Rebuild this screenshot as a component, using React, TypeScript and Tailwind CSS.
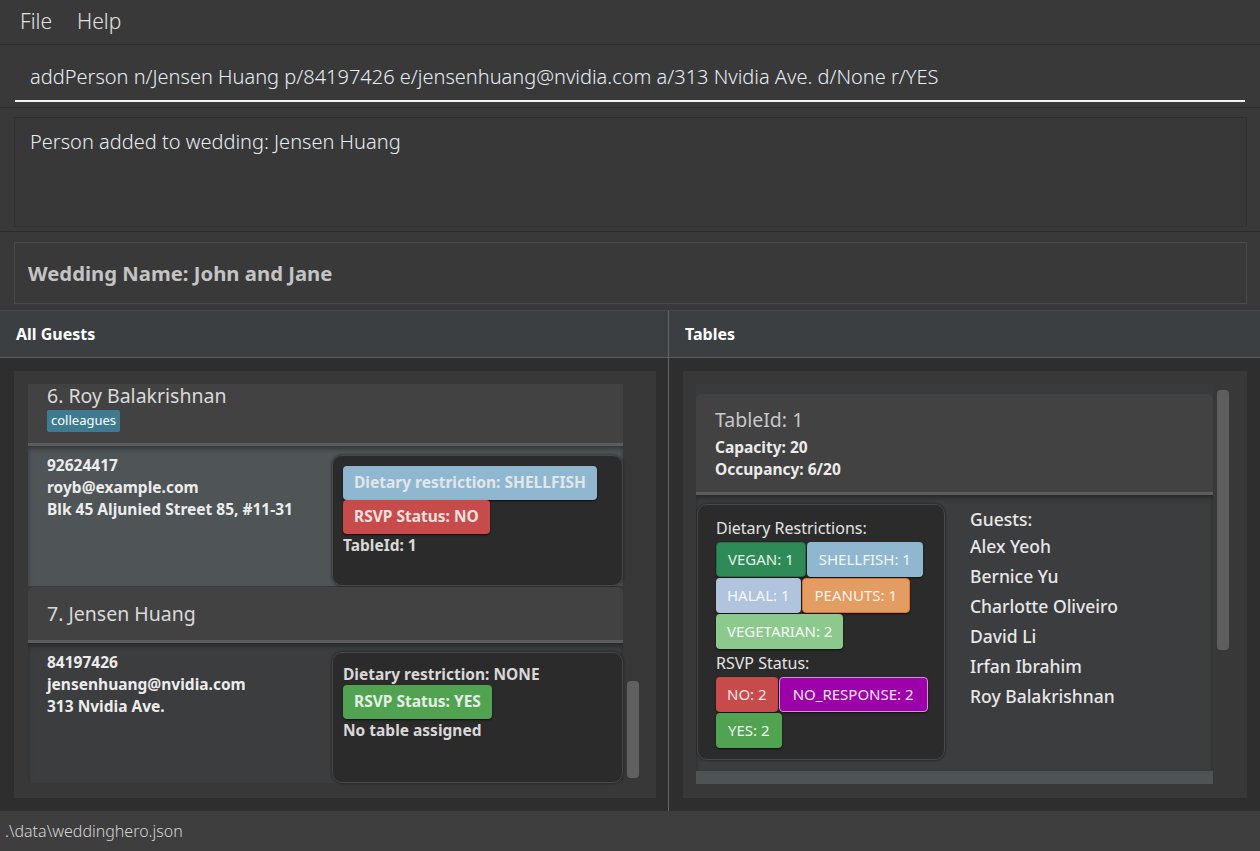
import React from "react";

// Badge used in guest cards and table summaries
const Badge = ({ children, className }: { children: React.ReactNode; className: string }) => (
  <div className={`flex items-center rounded-[4px] shadow-[0_1px_2px_rgba(0,0,0,0.7)] ${className}`}>{children}</div>
);

const PaneHeader = ({ title }: { title: string }) => (
  <div className="h-[47px] shrink-0 flex items-center px-4 bg-[#3b3f42] border-b border-[#5a5d60] text-[16px] font-bold text-white">
    {title}
  </div>
);

const InfoBox = ({ children }: { children: React.ReactNode }) => (
  <div className="w-[291px] h-[131px] mt-[9px] shrink-0 rounded-[10px] border border-[#484848] bg-[#2b2b2b] shadow-[0_0_3px_rgba(0,0,0,0.6)] px-[10px] pt-[10px] text-[15.5px] font-bold text-[#d8d8d8]">
    {children}
  </div>
);

const Details = ({ lines }: { lines: string[] }) => (
  <div className="flex-1 pl-[19px] pt-[8px] text-[15.5px] font-bold text-[#ececec] leading-[22px]">
    {lines.map((l) => (
      <div key={l}>{l}</div>
    ))}
  </div>
);

const guests = ["Alex Yeoh", "Bernice Yu", "Charlotte Oliveiro", "David Li", "Irfan Ibrahim", "Roy Balakrishnan"];

export default function App() {
  return (
    <div className="w-[1260px] h-[851px] overflow-hidden flex flex-col bg-[#393939] font-['Noto_Sans',sans-serif]">
      {/* menu bar */}
      <div className="h-[45px] shrink-0 flex items-center gap-[25px] pl-[20px] text-[21px] font-light text-[#e2e2e2] border-b border-[#2c2c2c]">
        <span>File</span>
        <span>Help</span>
      </div>

      {/* command box */}
      <div className="h-[63px] shrink-0 pt-[9px] px-[13px] border-b border-[#2c2c2c]">
        <div className="h-[48px] mx-[2px] flex items-center pl-[15px] border-b-2 border-[#f2f2f2] text-[20px] font-light text-[#e6edf5]">
          addPerson n/Jensen Huang p/84197426 e/jensenhuang@nvidia.com a/313 Nvidia Ave. d/None r/YES
        </div>
      </div>

      {/* result display */}
      <div className="h-[124px] shrink-0 pt-[9px] pb-[4px] pl-[14px] pr-[13px] border-b border-[#2c2c2c]">
        <div className="h-full border border-[#2f2f2f] bg-[#383838] pl-[15px] pt-[9px] text-[20px] font-light text-[#e6edf5]">
          Person added to wedding: Jensen Huang
        </div>
      </div>

      {/* wedding name */}
      <div className="h-[78px] shrink-0 pt-[10px] pb-[6px] pl-[14px] pr-[13px]">
        <div className="h-full flex items-center border border-[#4a4a4a] pl-[13px] text-[20.3px] font-bold text-[#c4c4c4]">
          Wedding Name: John and Jane
        </div>
      </div>

      {/* split pane */}
      <div className="h-[501px] shrink-0 flex border-t border-[#45494c] bg-[#2e2e2e]">
        {/* All guests */}
        <div className="w-[669px] shrink-0 flex flex-col border-r border-[#666]">
          <PaneHeader title="All Guests" />
          <div className="flex-1 pt-[13px] pl-[14px] pr-[12px] pb-[13px]">
            <div className="h-full bg-[#383838] flex pl-[14px] pt-[13px] pb-[14px]">
              <div className="w-[595px] shrink-0 flex flex-col">
                {/* card 6 (selected, scrolled partly out of view) */}
                <div className="shrink-0 bg-[#424242] pl-[19px] pt-[2px] pb-[11px]">
                  <div className="text-[19.5px] leading-[20px] text-[#dadada]">6. Roy Balakrishnan</div>
                  <div className="mt-[4px] inline-flex items-center h-[22px] px-[4px] rounded-[2px] bg-[#3e7b91] text-[13px] text-white">
                    colleagues
                  </div>
                </div>
                <div className="h-[3px] shrink-0 bg-[#5c5c5c]" />
                <div className="h-[140px] shrink-0 flex bg-[#4f5457] shadow-[inset_0_3px_4px_rgba(0,0,0,0.35)]">
                  <Details lines={["92624417", "royb@example.com", "Blk 45 Aljunied Street 85, #11-31"]} />
                  <InfoBox>
                    <Badge className="w-fit h-[34px] px-[11px] bg-[#8fb7cf] text-[#e2e6ea]">Dietary restriction: SHELLFISH</Badge>
                    <Badge className="w-fit h-[34px] px-[11px] bg-[#c84b4b] text-[#ece0e0]">RSVP Status: NO</Badge>
                    <div className="leading-[22px]">TableId: 1</div>
                  </InfoBox>
                </div>

                {/* card 7 */}
                <div className="mt-[1px] h-[53px] shrink-0 flex items-center rounded-t-[6px] bg-[#424242] pl-[19px]">
                  <div className="text-[19.5px] leading-[26px] text-[#dadada]">7. Jensen Huang</div>
                </div>
                <div className="h-[3px] shrink-0 bg-[#5c5c5c]" />
                <div className="h-[140px] shrink-0 flex bg-[#3c3d3f] shadow-[inset_0_3px_4px_rgba(0,0,0,0.35)]">
                  <Details lines={["84197426", "jensenhuang@nvidia.com", "313 Nvidia Ave."]} />
                  <InfoBox>
                    <div className="leading-[22px]">Dietary restriction: NONE</div>
                    <Badge className="w-fit h-[34px] px-[11px] bg-[#51a351] text-[#e4efe4]">RSVP Status: YES</Badge>
                    <div className="leading-[22px]">No table assigned</div>
                  </InfoBox>
                </div>
              </div>
              {/* scrollbar */}
              <div className="flex-1 pl-[4px] pt-[297px]">
                <div className="w-[12px] h-[97px] rounded-[4px] bg-[#606060]" />
              </div>
            </div>
          </div>
        </div>

        {/* Tables */}
        <div className="flex-1 flex flex-col">
          <PaneHeader title="Tables" />
          <div className="flex-1 pt-[13px] pl-[14px] pr-[13px] pb-[13px]">
            <div className="h-full bg-[#383838] flex pl-[13px] pt-[13px] pb-[14px] overflow-hidden">
              <div className="w-[517px] shrink-0 flex flex-col overflow-hidden bg-[#3a3b3c] pt-[10px]">
                <div className="shrink-0 rounded-t-[6px] bg-[#424242] pl-[19px] pt-[13px] pb-[12px]">
                  <div className="text-[19.5px] leading-[26px] text-[#c8c8c8]">TableId: 1</div>
                  <div className="mt-[3px] text-[15.5px] font-bold leading-[22px] text-[#ececec]">Capacity: 20</div>
                  <div className="text-[15.5px] font-bold leading-[22px] text-[#ececec]">Occupancy: 6/20</div>
                </div>
                <div className="h-[3px] shrink-0 bg-[#5c5c5c]" />
                <div className="h-[275px] shrink-0 flex bg-[#3c3d3f] pt-[9px] pl-[1px] shadow-[inset_0_3px_4px_rgba(0,0,0,0.35)]">
                  <div className="w-[248px] h-[256px] shrink-0 rounded-[10px] border border-[#484848] bg-[#2b2b2b] shadow-[0_0_3px_rgba(0,0,0,0.6)] pl-[18px] pt-[12px] text-[16px] text-[#e4e4e4]">
                    <div className="leading-[22px]">Dietary Restrictions:</div>
                    <div className="mt-[3px] flex flex-col gap-[1px] text-[15px]">
                      <div className="flex gap-[1px]">
                        <Badge className="h-[35px] px-[11px] bg-[#2e8b57] border border-[#237047] text-[#e6f2ea]">VEGAN: 1</Badge>
                        <Badge className="h-[35px] px-[12px] bg-[#8fb7cf] text-[#f2f5f8]">SHELLFISH: 1</Badge>
                      </div>
                      <div className="flex gap-[1px]">
                        <Badge className="h-[35px] px-[11px] bg-[#b0c4de] text-[#f6f8fa]">HALAL: 1</Badge>
                        <Badge className="h-[35px] px-[12px] bg-[#e39c62] border border-[#e0702a] text-[#fbf2ea]">PEANUTS: 1</Badge>
                      </div>
                      <div className="flex gap-[1px]">
                        <Badge className="h-[35px] px-[11px] bg-[#8cc98c] text-[#f6fbf6]">VEGETARIAN: 2</Badge>
                      </div>
                    </div>
                    <div className="mt-[3px] leading-[22px]">RSVP Status:</div>
                    <div className="mt-[3px] flex flex-col gap-[1px] text-[15px]">
                      <div className="flex gap-[1px]">
                        <Badge className="h-[35px] px-[11px] bg-[#c84b4b] text-[#f4e8e8]">NO: 2</Badge>
                        <Badge className="h-[35px] px-[13px] bg-[#9c00a8] border border-[#d58fdc] text-[#f6e8f8]">NO_RESPONSE: 2</Badge>
                      </div>
                      <div className="flex gap-[1px]">
                        <Badge className="h-[35px] px-[12px] bg-[#51a351] text-[#eef6ee]">YES: 2</Badge>
                      </div>
                    </div>
                  </div>
                  <div className="pl-[25px] pt-[3px] text-[17.5px] font-medium text-[#e8e8e8]">
                    <div className="leading-[24px]">Guests:</div>
                    {guests.map((g) => (
                      <div key={g} className="leading-[30px]">
                        {g}
                      </div>
                    ))}
                  </div>
                </div>
                <div className="mt-[1px] h-[13px] shrink-0 bg-[#4e5356]" />
              </div>
              {/* scrollbar */}
              <div className="flex-1 pl-[4px] pt-[6px]">
                <div className="w-[12px] h-[260px] rounded-[4px] bg-[#5e5e5e]" />
              </div>
            </div>
          </div>
        </div>
      </div>

      {/* status bar */}
      <div className="flex-1 flex items-center pl-[5px] bg-[#3e3e3e] text-[16px] font-light text-[#d4d4d4]">
        .\data\weddinghero.json
      </div>
    </div>
  );
}
